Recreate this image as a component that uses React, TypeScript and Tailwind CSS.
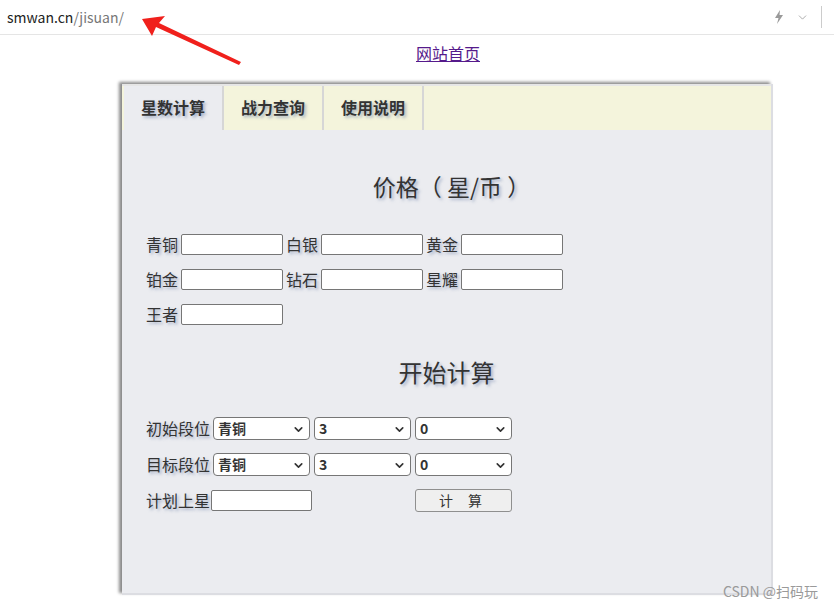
import { ChevronDown } from 'lucide-react';

const FONT = '"Microsoft YaHei", "Noto Sans CJK SC", "Noto Sans", sans-serif';
const SHADOW = '[text-shadow:2px_2px_3px_rgba(110,130,170,0.55)]';

const PRICE_ROWS = [
  ['青铜', '白银', '黄金'],
  ['铂金', '钻石', '星耀'],
  ['王者'],
];

function Field({ label }: { label: string }) {
  return (
    <label className="flex items-center">
      <span className={`text-[16px] leading-[21px] text-[#333] ${SHADOW}`}>{label}</span>
      <input className="ml-[3px] h-[21px] w-[102px] rounded-[2px] border border-[#767676] bg-white" />
    </label>
  );
}

function Select({ value }: { value: string }) {
  return (
    <div className="relative flex h-[23px] w-[97px] items-center rounded-[4px] border border-[#767676] bg-white pl-[4px] text-[14px] font-semibold text-[#333]">
      {value}
      <ChevronDown className="absolute right-[4px] top-[5px] h-[13px] w-[13px] text-[#333]" strokeWidth={3} />
    </div>
  );
}

function RankRow({ label }: { label: string }) {
  return (
    <div className="flex items-center">
      <span className={`mr-[3px] text-[16px] leading-[23px] text-[#333] ${SHADOW}`}>{label}</span>
      <div className="flex gap-[4px]">
        <Select value="青铜" />
        <Select value="3" />
        <Select value="0" />
      </div>
    </div>
  );
}

export default function App() {
  return (
    <div className="relative h-[611px] w-[834px] overflow-hidden bg-white" style={{ fontFamily: FONT }}>
      {/* 地址栏 */}
      <div className="flex h-[35px] items-center justify-between border-b border-[#e5e5e5] pl-[7px] pr-[12px]">
        <span className="text-[14px] text-[#222]">
          smwan.cn<span className="text-[#777]">/jisuan/</span>
        </span>
        <div className="flex items-center gap-[12px] text-[#999]">
          <svg width="10" height="14" viewBox="0 0 10 14">
            <path d="M6 0 L1 8 H4.5 L3 14 L9 5 H5.5 Z" fill="#9a9a9a" />
          </svg>
          <ChevronDown className="h-[13px] w-[13px]" strokeWidth={1.5} />
          <span className="h-[22px] w-px bg-[#ccc]" />
        </div>
      </div>

      {/* 红色箭头 */}
      <svg className="absolute left-[135px] top-[10px]" width="115" height="56" viewBox="0 0 115 56">
        <path d="M7 9 L30 6 L24 13 L106 52 L104 55 L21 17 L17 26 Z" fill="#f0201c" />
      </svg>

      <div className="mt-[6px] pl-[62px] text-center">
        <a href="#" className="text-[16px] text-[#551a8b] underline">网站首页</a>
      </div>

      {/* 主面板 */}
      <div className="ml-[122px] mt-[19px] h-[511px] w-[651px] border-b-2 border-r-2 border-[#dcdde2] bg-[#ebecf0] shadow-[-3px_-2px_3px_#8a8a8a]">
        <div className="flex h-[46px] border-t-2 border-[#e6e6e6] bg-[#f4f4dc]">
          {['星数计算', '战力查询', '使用说明'].map((t, i) => (
            <div
              key={t}
              className={`flex w-[100px] items-center justify-center border-r-2 border-[#d6d6d6] pb-[2px] text-[16px] font-bold text-[#333] ${SHADOW} ${
                i === 0 ? 'ml-[2px] w-[99px] bg-[#ebecf0]' : ''
              }`}
            >
              {t}
            </div>
          ))}
        </div>

        <h2 className={`mt-[41px] pl-[10px] text-center text-[23px] leading-[30px] text-[#333] ${SHADOW}`}>价格（ 星/币 ）</h2>

        <div className="mt-[33px] flex flex-col gap-[14px] pl-[24px]">
          {PRICE_ROWS.map((row, i) => (
            <div key={i} className="flex gap-[3px]">
              {row.map((l) => (
                <Field key={l} label={l} />
              ))}
            </div>
          ))}
        </div>

        <h2 className={`mt-[31px] text-center text-[24px] leading-[32px] text-[#333] ${SHADOW}`}>开始计算</h2>

        <div className="mt-[29px] flex flex-col gap-[13px] pl-[24px]">
          <RankRow label="初始段位" />
          <RankRow label="目标段位" />
          <div className="flex items-center">
            <span className={`text-[16px] leading-[23px] text-[#333] ${SHADOW}`}>计划上星</span>
            <input className="ml-px h-[21px] w-[101px] rounded-[2px] border border-[#767676] bg-white" />
            <button className="ml-[103px] h-[23px] w-[97px] rounded-[3px] border border-[#8f8f8f] bg-[#efefef] text-[14px] tracking-[6px] text-[#333]">
              计 算
            </button>
          </div>
        </div>
      </div>

      <span className="absolute bottom-[9px] right-[16px] text-[14px] text-[#9a9a9a]">CSDN @扫码玩</span>
    </div>
  );
}
